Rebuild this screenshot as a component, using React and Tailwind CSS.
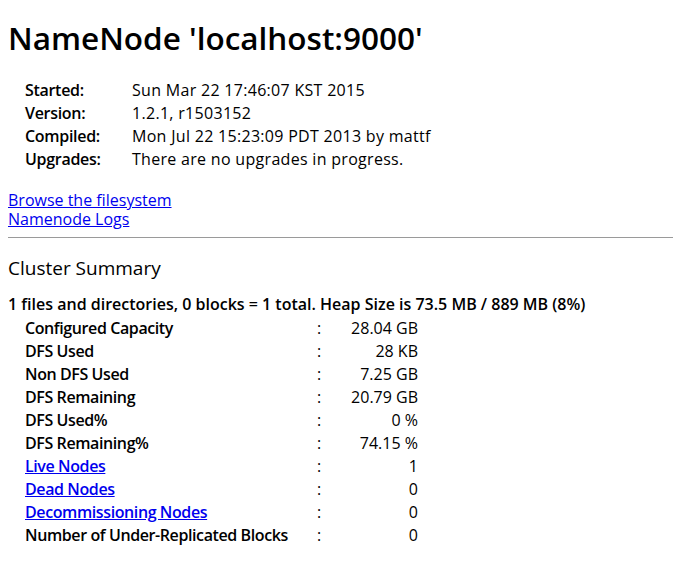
const info = [
  ['Started:', 'Sun Mar 22 17:46:07 KST 2015'],
  ['Version:', '1.2.1, r1503152'],
  ['Compiled:', 'Mon Jul 22 15:23:09 PDT 2013 by mattf'],
  ['Upgrades:', 'There are no upgrades in progress.'],
];

const summary = [
  { label: 'Configured Capacity', value: '28.04 GB' },
  { label: 'DFS Used', value: '28 KB' },
  { label: 'Non DFS Used', value: '7.25 GB' },
  { label: 'DFS Remaining', value: '20.79 GB' },
  { label: 'DFS Used%', value: '0 %' },
  { label: 'DFS Remaining%', value: '74.15 %' },
  { label: 'Live Nodes', value: '1', link: true },
  { label: 'Dead Nodes', value: '0', link: true },
  { label: 'Decommissioning Nodes', value: '0', link: true },
  { label: 'Number of Under-Replicated Blocks', value: '0' },
];

export default function App() {
  return (
    <div className="min-h-[568px] bg-white px-2 text-black font-['Open_Sans','Noto_Sans',sans-serif] text-[16px]">
      {/* header */}
      <h1 className="pt-[18px] text-[31.5px] font-semibold leading-[40px]">NameNode 'localhost:9000'</h1>

      <div className="mt-[20px] pl-[17px]">
        {info.map(([k, v]) => (
          <div key={k} className="flex h-[23px] items-center">
            <span className="w-[107px] font-semibold tracking-[-0.3px]">{k}</span>
            <span className="tracking-[0.3px]">{v}</span>
          </div>
        ))}
      </div>

      {/* links */}
      <div className="mt-[21px] flex flex-col leading-[19px]">
        <a href="#" className="text-[#0000ee] underline">Browse the filesystem</a>
        <a href="#" className="text-[#0000ee] underline">Namenode Logs</a>
      </div>

      <hr className="mt-[8px] -mr-2 border-t border-[#9a9a9a]" />

      {/* cluster summary */}
      <h3 className="mt-[18px] text-[19px] leading-[24px]">Cluster Summary</h3>

      <div className="mt-[13px] font-semibold leading-[23px]">
        1 files and directories, 0 blocks = 1 total. Heap Size is 73.5 MB / 889 MB (8%)
      </div>

      <div className="pl-[17px]">
        {summary.map((r) => (
          <div key={r.label} className="flex h-[23px] items-center">
            <span className="w-[292px] font-semibold tracking-[-0.4px]">
              {r.link ? <a href="#" className="text-[#0000ee] underline">{r.label}</a> : r.label}
            </span>
            <span className="w-[20px]">:</span>
            <span className="w-[81px] text-right">{r.value}</span>
          </div>
        ))}
      </div>
    </div>
  );
}
